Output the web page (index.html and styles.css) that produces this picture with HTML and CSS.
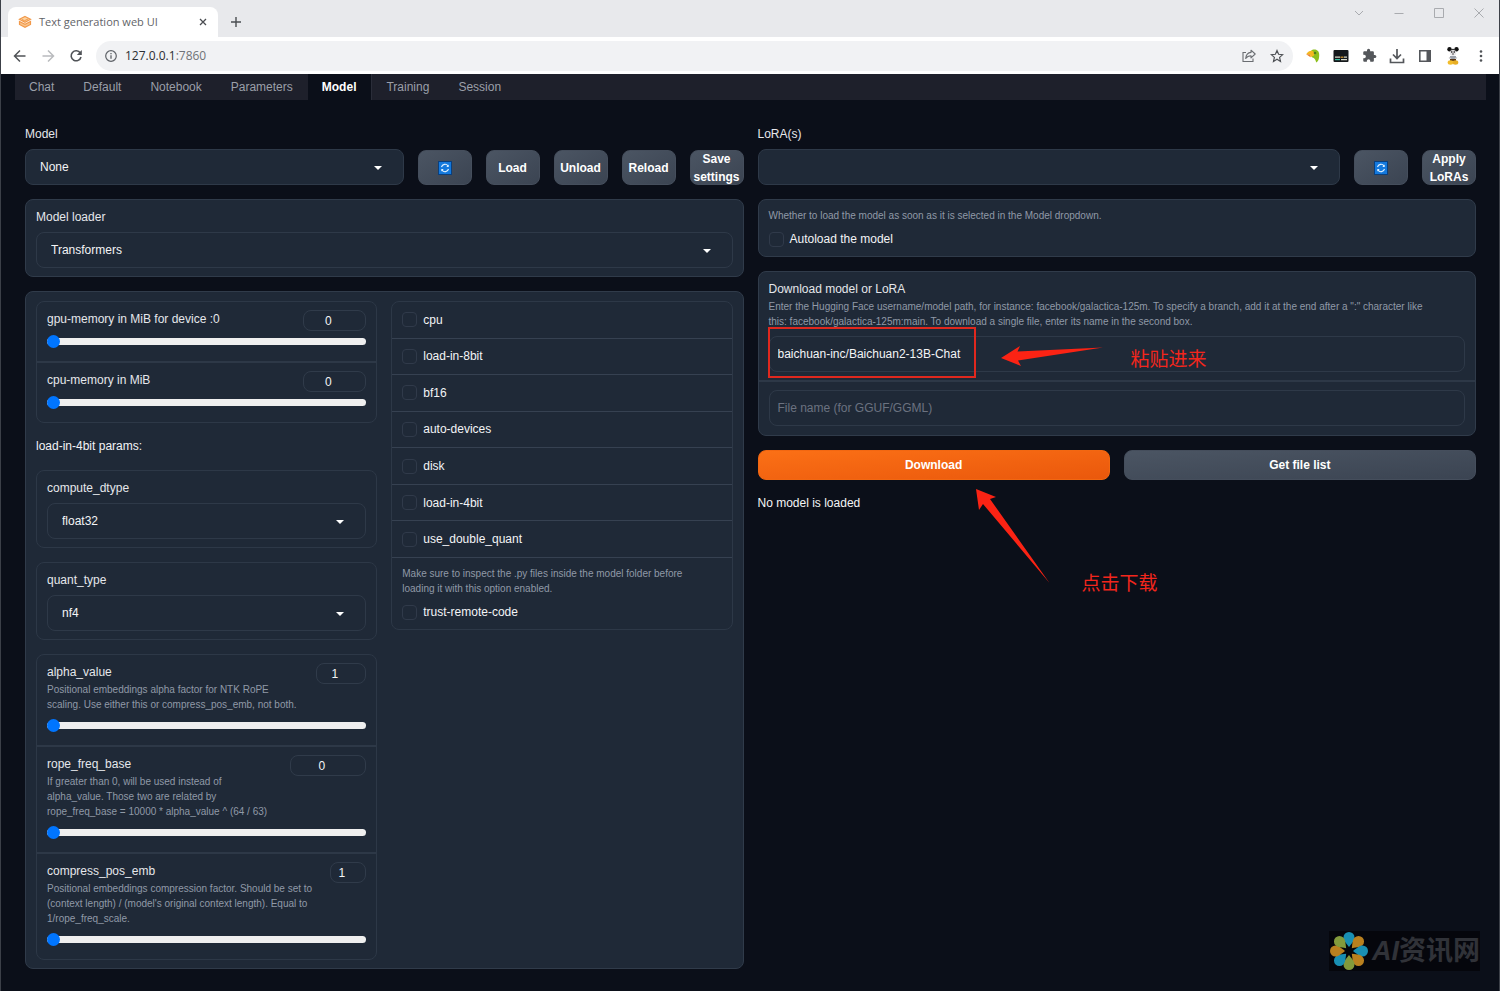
FILE: index.html
```html
<!DOCTYPE html>
<html lang="en">
<head>
<meta charset="utf-8">
<title>Text generation web UI</title>
<link rel="stylesheet" href="styles.css">
</head>
<body>
<div class="window">
  <header class="browser">
    <div class="tabstrip">
      <div class="tab">
        <svg class="favicon" viewBox="0 0 14 14" width="14" height="14"><path d="M7 1.5 12.5 4.3 7 7.2 1.5 4.3Z" fill="#fcd3a0" stroke="#f2994a" stroke-width="1.2"/><path d="M1.5 6.5v3L7 12.3l5.500-2.800v-3L7 9.400Z" fill="#f9c38a" stroke="#f2994a" stroke-width="1.200"/><path d="m4 4.500 2.500 1.200L10 4" fill="none" stroke="#f2994a"/></svg>
        <span class="tab-title">Text generation web UI</span>
        <button class="icon-btn tab-close" aria-label="Close tab"><svg viewBox="0 0 10 10" width="10" height="10"><path d="m2 2 6 6M8 2 2 8" stroke="#4a4d51" stroke-width="1.300"/></svg></button>
      </div>
      <button class="icon-btn new-tab" aria-label="New tab"><svg viewBox="0 0 12 12" width="12" height="12"><path d="M6 1v10M1 6h10" stroke="#4a4d51" stroke-width="1.400"/></svg></button>
      <div class="window-controls">
        <button class="icon-btn win-btn" aria-label="Search tabs"><svg viewBox="0 0 12 12" width="12" height="12"><path d="m2 4 4 4 4-4" fill="none" stroke="#a9abaf"/></svg></button>
        <button class="icon-btn win-btn" aria-label="Minimize"><svg viewBox="0 0 12 12" width="12" height="12"><path d="M1.500 6.500h9" stroke="#a9abaf"/></svg></button>
        <button class="icon-btn win-btn" aria-label="Maximize"><svg viewBox="0 0 12 12" width="12" height="12"><path d="M1.500 1.500h9v9h-9Z" fill="none" stroke="#a9abaf"/></svg></button>
        <button class="icon-btn win-btn" aria-label="Close"><svg viewBox="0 0 12 12" width="12" height="12"><path d="m1.500 1.500 9 9m0-9-9 9" stroke="#a9abaf"/></svg></button>
      </div>
    </div>
    <div class="toolbar">
      <div class="tool-group">
        <button class="icon-btn tool-btn" aria-label="Back"><svg viewBox="0 0 14 14" width="14" height="14"><path d="M12.500 7h-11M7 1.500 1.500 7 7 12.500" fill="none" stroke="#505357" stroke-width="1.500"/></svg></button>
        <button class="icon-btn tool-btn" aria-label="Forward"><svg viewBox="0 0 14 14" width="14" height="14"><path d="M1.500 7h11M7 1.500 12.500 7 7 12.500" fill="none" stroke="#b9bbbe" stroke-width="1.500"/></svg></button>
        <button class="icon-btn tool-btn" aria-label="Reload"><svg viewBox="0 0 14 14" width="14" height="14"><path d="M11.300 4A5 5 0 1 0 12 8" fill="none" stroke="#505357" stroke-width="1.600"/><path d="M12.800 1v5H7.800Z" fill="#505357"/></svg></button>
      </div>
      <div class="omnibox">
        <svg viewBox="0 0 14 14" width="14" height="14"><circle cx="7" cy="7" r="5.300" fill="none" stroke="#5f6368" stroke-width="1.200"/><path d="M7 6.200v3.600M7 4v1.200" stroke="#5f6368" stroke-width="1.300"/></svg>
        <span class="url">127.0.0.1<span class="port">:7860</span></span>
        <button class="icon-btn tool-btn" aria-label="Share"><svg viewBox="0 0 14 14" width="14" height="14"><path d="M4 3.500H1v9h10v-3" fill="none" stroke="#6a6d71" stroke-width="1.100"/><path d="M9 1.200 13.200 5 9 8.800V6.700C6.500 6.700 5 7.500 3.700 9.500 4 6 6 3.700 9 3.400Z" fill="none" stroke="#6a6d71" stroke-width="1.100" stroke-linejoin="round"/></svg></button>
        <button class="icon-btn tool-btn" aria-label="Bookmark"><svg viewBox="0 0 14 14" width="14" height="14"><path d="m7 1.500 1.600 3.800 4.100.4-3.100 2.700.9 4L7 10.300l-3.500 2.100.9-4L1.300 5.700l4.100-.4Z" fill="none" stroke="#505357" stroke-width="1.200"/></svg></button>
      </div>
      <div class="tool-group">
        <button class="icon-btn tool-btn" aria-label="Parrot extension"><svg viewBox="0 0 14 14" width="14" height="14"><path d="M5 2C7-.5 13.500 0 13.200 6c0 3-.6 6.500-3 7.500-.6-2.500-1.300-4.500-4.300-5.300Z" fill="#8dbf1c"/><path d="M6 1.700C3.500 1.500 1.200 3 .2 5.300L4 5.300 4.500 8.300 8 6.500C9 4.500 8 2.500 6 1.700Z" fill="#f5b81f"/><path d="M.2 5.300 4 5.300 4.500 8.300Z" fill="#e8842a"/><circle cx="9" cy="4" r="1.300" fill="#4d7d1b"/></svg></button>
        <button class="icon-btn tool-btn" aria-label="Subtitles extension"><svg viewBox="0 0 16 14" width="16" height="14"><rect x=".5" y="1" width="15" height="12" rx="1" fill="#15181b"/><path d="M2 8.200h5M11 8.200h3M8 10.600h6" stroke="#d8d8c8" stroke-width="1.200"/><path d="M7.500 8.200h3" stroke="#e0a030" stroke-width="1.200"/><path d="M2 10.600h5" stroke="#36bfa0" stroke-width="1.200"/></svg></button>
        <button class="icon-btn tool-btn" aria-label="Extensions"><svg viewBox="0 0 24 24" width="15" height="15"><path fill="#54575b" d="M20.500 11H19V7c0-1.100-.9-2-2-2h-4V3.500a2.500 2.500 0 0 0-5 0V5H4c-1.100 0-2 .9-2 2v3.800h1.500a2.700 2.700 0 0 1 0 5.400H2V20c0 1.100.9 2 2 2h3.800v-1.500a2.700 2.700 0 0 1 5.400 0V22H17c1.100 0 2-.9 2-2v-4h1.500a2.500 2.500 0 0 0 0-5Z"/></svg></button>
        <button class="icon-btn tool-btn" aria-label="Downloads"><svg viewBox="0 0 16 16" width="16" height="16"><path d="M8 1v9M4 6.500l4 4 4-4M1.500 10.500v4h13v-4" fill="none" stroke="#54575b" stroke-width="1.700"/></svg></button>
        <button class="icon-btn tool-btn" aria-label="Side panel"><svg viewBox="0 0 14 14" width="14" height="14"><path d="M1.800 1.800h10.400v10.400H1.800Z" fill="none" stroke="#54575b" stroke-width="1.600"/><path d="M8.500 1.500h4v11h-4Z" fill="#54575b"/></svg></button>
        <button class="icon-btn tool-btn" aria-label="Profile"><svg viewBox="0 0 14 20" width="14" height="20"><circle cx="3.500" cy="3.200" r="2.200" fill="#111"/><circle cx="10.500" cy="3.200" r="2.200" fill="#111"/><circle cx="7" cy="5.500" r="2.800" fill="#333"/><ellipse cx="7" cy="7" rx="3.200" ry="3" fill="#e9e7ea"/><path d="M5.800 5v2M8.200 5v2M6.200 8h1.600" stroke="#111" stroke-width=".9"/><path d="M4 10h6v3H4Z" fill="#9ba1ab"/><path d="M3 11.500 5 13M11 11.500 9 13" stroke="#ccc" stroke-width="1.500"/><path d="M4 13h6v2H4Z" fill="#5a3512"/><ellipse cx="4.500" cy="16.500" rx="2.800" ry="2.200" fill="#f2bd2c"/><ellipse cx="9.500" cy="16.500" rx="2.800" ry="2.200" fill="#e8ae24"/></svg></button>
        <button class="icon-btn tool-btn" aria-label="Menu"><svg viewBox="0 0 4 14" width="4" height="14"><g fill="#505357"><circle cx="2" cy="2.500" r="1.300"/><circle cx="2" cy="7" r="1.300"/><circle cx="2" cy="11.500" r="1.300"/></g></svg></button>
      </div>
    </div>
  </header>

  <div class="app">
    <nav class="nav">
      <button class="nav-tab">Chat</button>
      <button class="nav-tab">Default</button>
      <button class="nav-tab">Notebook</button>
      <button class="nav-tab">Parameters</button>
      <button class="nav-tab nav-tab-active">Model</button>
      <button class="nav-tab">Training</button>
      <button class="nav-tab">Session</button>
    </nav>

    <main class="columns">
      <section class="column">
        <div class="control-row">
          <div class="field field-grow">
            <label class="label" for="model">Model</label>
            <div class="select-wrap"><select class="input filled" id="model"><option>None</option></select></div>
          </div>
          <button class="btn btn-small" aria-label="Refresh models"><svg viewBox="0 0 14 14" width="14" height="14"><rect width="14" height="14" fill="#0a3f7d"/><rect x="1" y="1" width="12" height="12" fill="#1479dd"/><path d="M3.500 6A3.700 3.700 0 0 1 10 4.800M10.500 8A3.700 3.700 0 0 1 4 9.200" fill="none" stroke="#e4f3ff" stroke-width="1.100"/><path d="M10.700 3.500v2.500H8.300ZM3.300 10.500V8H5.700Z" fill="#e4f3ff"/></svg></button>
          <button class="btn btn-small">Load</button>
          <button class="btn btn-small">Unload</button>
          <button class="btn btn-small">Reload</button>
          <button class="btn btn-small">Save settings</button>
        </div>

        <div class="block">
          <div class="field pad">
            <label class="label" for="loader">Model loader</label>
            <div class="select-wrap"><select class="input" id="loader"><option>Transformers</option></select></div>
          </div>
        </div>

        <div class="block params">
          <div class="param-col">
            <div class="block">
              <div class="slider-row">
                <div class="slider-head">
                  <div class="slider-text"><label class="label" for="gpu">gpu-memory in MiB for device :0</label></div>
                  <input class="number number-m" type="number" value="0" aria-label="gpu-memory value">
                </div>
                <input class="slider" id="gpu" type="range" min="0" max="100" value="0">
              </div>
              <div class="slider-row">
                <div class="slider-head">
                  <div class="slider-text"><label class="label" for="cpumem">cpu-memory in MiB</label></div>
                  <input class="number number-m" type="number" value="0" aria-label="cpu-memory value">
                </div>
                <input class="slider" id="cpumem" type="range" min="0" max="100" value="0">
              </div>
            </div>

            <p class="note">load-in-4bit params:</p>

            <div class="block">
              <div class="field pad">
                <label class="label" for="dtype">compute_dtype</label>
                <div class="select-wrap"><select class="input" id="dtype"><option>float32</option></select></div>
              </div>
            </div>
            <div class="block">
              <div class="field pad">
                <label class="label" for="quant">quant_type</label>
                <div class="select-wrap"><select class="input" id="quant"><option>nf4</option></select></div>
              </div>
            </div>

            <div class="block">
              <div class="slider-row">
                <div class="slider-head">
                  <div class="slider-text"><label class="label" for="alpha">alpha_value</label>
                    <p class="info">Positional embeddings alpha factor for NTK RoPE scaling. Use either this or compress_pos_emb, not both.</p></div>
                  <input class="number number-s" type="number" value="1" aria-label="alpha_value number">
                </div>
                <input class="slider" id="alpha" type="range" min="1" max="8" value="1">
              </div>
              <div class="slider-row">
                <div class="slider-head">
                  <div class="slider-text"><label class="label" for="rope">rope_freq_base</label>
                    <p class="info">If greater than 0, will be used instead of alpha_value. Those two are related by rope_freq_base = 10000 * alpha_value ^ (64 / 63)</p></div>
                  <input class="number number-l" type="number" value="0" aria-label="rope_freq_base number">
                </div>
                <input class="slider" id="rope" type="range" min="0" max="100" value="0">
              </div>
              <div class="slider-row">
                <div class="slider-head">
                  <div class="slider-text"><label class="label" for="compress">compress_pos_emb</label>
                    <p class="info">Positional embeddings compression factor. Should be set to (context length) / (model's original context length). Equal to 1/rope_freq_scale.</p></div>
                  <input class="number number-xs" type="number" value="1" aria-label="compress_pos_emb number">
                </div>
                <input class="slider" id="compress" type="range" min="1" max="8" value="1">
              </div>
            </div>
          </div>

          <div class="param-col">
            <div class="block">
              <div class="check-list">
                <label class="check"><input class="box" type="checkbox">cpu</label>
                <label class="check"><input class="box" type="checkbox">load-in-8bit</label>
                <label class="check"><input class="box" type="checkbox">bf16</label>
                <label class="check"><input class="box" type="checkbox">auto-devices</label>
                <label class="check"><input class="box" type="checkbox">disk</label>
                <label class="check"><input class="box" type="checkbox">load-in-4bit</label>
                <label class="check"><input class="box" type="checkbox">use_double_quant</label>
              </div>
              <div class="info-check pad">
                <p class="info">Make sure to inspect the .py files inside the model folder before<br>loading it with this option enabled.</p>
                <label class="check-plain"><input class="box" type="checkbox">trust-remote-code</label>
              </div>
            </div>
          </div>
        </div>
      </section>

      <section class="column">
        <div class="control-row">
          <div class="field field-grow">
            <label class="label" for="lora">LoRA(s)</label>
            <div class="select-wrap"><select class="input filled" id="lora"><option></option></select></div>
          </div>
          <button class="btn btn-small" aria-label="Refresh LoRAs"><svg viewBox="0 0 14 14" width="14" height="14"><rect width="14" height="14" fill="#0a3f7d"/><rect x="1" y="1" width="12" height="12" fill="#1479dd"/><path d="M3.500 6A3.700 3.700 0 0 1 10 4.800M10.500 8A3.700 3.700 0 0 1 4 9.200" fill="none" stroke="#e4f3ff" stroke-width="1.100"/><path d="M10.700 3.500v2.500H8.300ZM3.300 10.500V8H5.700Z" fill="#e4f3ff"/></svg></button>
          <button class="btn btn-small">Apply LoRAs</button>
        </div>

        <div class="block">
          <div class="info-check pad">
            <p class="info">Whether to load the model as soon as it is selected in the Model dropdown.</p>
            <label class="check-plain"><input class="box" type="checkbox">Autoload the model</label>
          </div>
        </div>

        <div class="block">
          <div class="download-row pad">
            <label class="label" for="repo">Download model or LoRA</label>
            <p class="info">Enter the Hugging Face username/model path, for instance: facebook/galactica-125m. To specify a branch, add it at the end after a ":" character like<br>this: facebook/galactica-125m:main. To download a single file, enter its name in the second box.</p>
            <div class="repo-field">
              <input class="input text-input" id="repo" type="text" value="baichuan-inc/Baichuan2-13B-Chat">
              <div class="mark-box"></div>
              <div class="callout callout-paste" lang="zh">
                <svg viewBox="0 0 102 22" width="102" height="22"><path d="M0 12 19 0 16.500 5.500 102 1.500 17 14.500 20 20Z" fill="#fb2314"/></svg>
                <span>粘贴进来</span>
              </div>
            </div>
          </div>
          <div class="download-row pad">
            <input class="input text-input" type="text" placeholder="File name (for GGUF/GGML)" aria-label="File name">
          </div>
        </div>

        <div class="button-row">
          <button class="btn btn-primary">Download</button>
          <button class="btn">Get file list</button>
          <div class="callout callout-click" lang="zh">
            <svg viewBox="0 0 74 96" width="74" height="96"><path d="M0 0 20 8 14 10 73.500 94 7 15 3 21Z" fill="#fb2314"/></svg>
            <span>点击下载</span>
          </div>
        </div>
        <p class="note">No model is loaded</p>
      </section>
    </main>
  </div>

  <div class="watermark" lang="zh">
    <svg viewBox="0 0 38 38" width="38" height="38">
      <defs><path id="petal" d="M19 15C15 10 13.500 8 13.500 5.500a5.500 5.500 0 0 1 11 0C24.500 8 23 10 19 15Z"/></defs>
      <use href="#petal" fill="#198fb3"/><use href="#petal" fill="#b9801f" transform="rotate(45 19 19)"/><use href="#petal" fill="#198fb3" transform="rotate(90 19 19)"/><use href="#petal" fill="#b9801f" transform="rotate(135 19 19)"/><use href="#petal" fill="#829a3c" transform="rotate(180 19 19)"/><use href="#petal" fill="#198fb3" transform="rotate(225 19 19)"/><use href="#petal" fill="#b9801f" transform="rotate(270 19 19)"/><use href="#petal" fill="#829a3c" transform="rotate(315 19 19)"/>
    </svg>
    <span><i>AI</i>资讯网</span>
  </div>
</div>
</body>
</html>
```
FILE: styles.css
```css
* { box-sizing: border-box; }
body {
  margin: 0;
  background: #0b0f19;
  color: #f3f4f6;
  font: 12px/18px "Liberation Sans", Arial, sans-serif;
}
p { margin: 0; }
button, input, select { font: inherit; color: inherit; }
button { cursor: pointer; }
svg { display: block; flex: none; }

.window {
  position: relative;
  min-height: 100vh;
  border: solid #3c4048;
  border-width: 0 1px;
}

/* Browser frame */
.browser { background: #fff; color: #5f6368; font-family: "Open Sans", "Noto Sans", sans-serif; }
.icon-btn {
  display: flex;
  align-items: center;
  justify-content: center;
  padding: 0;
  border: 0;
  background: none;
}
.tabstrip { display: flex; height: 37px; padding-left: 7px; background: #e8e9ec; }
.tab {
  display: flex;
  align-items: center;
  width: 210px;
  margin-top: 7px;
  padding: 0 8px 0 10px;
  border-radius: 8px 8px 0 0;
  background: #fff;
}
.tab-title { flex: 1; margin-left: 7px; font-size: 11px; }
.tab-close { width: 14px; height: 14px; }
.new-tab { width: 28px; margin: 6px 0 0 4px; }
.window-controls { display: flex; margin-left: auto; height: 26px; }
.win-btn { width: 40px; }
.toolbar { display: flex; align-items: center; gap: 6px; height: 37px; padding: 0 4px 0 5px; }
.tool-group { display: flex; }
.tool-btn { width: 28px; height: 28px; }
.omnibox {
  display: flex;
  flex: 1;
  align-items: center;
  height: 30px;
  padding: 0 2px 0 8px;
  border-radius: 15px;
  background: #f1f2f4;
}
.url { flex: 1; margin-left: 7px; color: #2b2e32; font-size: 12px; }
.port { color: #6f7277; }

/* App navigation */
.app { padding: 0 13px 21px 14px; }
.nav { display: flex; background: #1e202b; }
.nav-tab {
  height: 26px;
  padding: 0 15px 0 14px;
  border: 0;
  background: none;
  color: #9b9fa9;
}
.nav-tab-active { border-right: 1px solid #2a2d39; background: #0b0f19; color: #fff; font-weight: 700; }

/* Layout */
.columns { display: grid; grid-template-columns: 1fr 1fr; gap: 14px; padding: 25px 10px 0; }
.column, .param-col { display: flex; flex-direction: column; gap: 14px; min-width: 0; }
.control-row { display: flex; align-items: flex-end; gap: 14px; }
.field { display: flex; flex-direction: column; gap: 6px; }
.field-grow { flex: 1; }
.pad { padding: 8px 10px; }
.block { border: 1px solid #303b4a; border-radius: 8px; background: #1f2937; }
.params { display: grid; grid-template-columns: 1fr 1fr; gap: 14px; padding: 9px 10px 8px; }
.params .block { border-color: #2d3847; }
.param-col { align-self: start; }

/* Text */
.label { display: block; color: #e5e7eb; }
.info { margin-top: 1px; color: #9099a7; font-size: 10px; line-height: 15px; }
.note { line-height: 19px; }

/* Inputs */
.input {
  display: block;
  width: 100%;
  height: 36px;
  padding: 0 14px;
  border: 1px solid #2e3948;
  border-radius: 8px;
  outline: 0;
  background: transparent;
  appearance: none;
}
.filled { background: #1f2937; }
.text-input { padding: 0 8px; }
.text-input::placeholder { color: #6b7280; }
.select-wrap { position: relative; }
.select-wrap::after {
  content: "";
  position: absolute;
  top: 17px;
  right: 22px;
  border: 4px solid transparent;
  border-top-color: #fff;
  border-bottom: 0;
  pointer-events: none;
}

/* Buttons */
.btn {
  display: flex;
  flex: 1;
  align-items: center;
  justify-content: center;
  height: 30px;
  padding: 0 2px;
  border: 1px solid #454e5c;
  border-radius: 8px;
  background: linear-gradient(to bottom right, #4b5563, #3b4452);
  color: #fff;
  font-weight: 700;
}
.btn-small { flex: none; width: 54px; height: 35px; line-height: 18px; }
.btn-primary { border-color: #f26711; background: linear-gradient(to bottom right, #fb7016, #ea580c); }
.button-row { position: relative; display: flex; gap: 14px; }

/* Sliders */
.slider-row { padding: 8px 10px 13px; }
.slider-row + .slider-row, .download-row + .download-row { border-top: 2px solid #2d3847; }
.download-row + .download-row { padding-bottom: 9px; }
.slider-head { display: flex; align-items: flex-start; gap: 12px; }
.slider-text { flex: 1; padding-bottom: 4px; }
.number {
  height: 21px;
  padding: 0 13px 0 0;
  border: 1px solid #303b4a;
  border-radius: 8px;
  background: transparent;
  text-align: center;
  appearance: textfield;
}
.number::-webkit-inner-spin-button { display: none; }
.number-xs { width: 36px; }
.number-s { width: 50px; }
.number-m { width: 63px; }
.number-l { width: 76px; }
.slider {
  display: block;
  width: 100%;
  height: 13px;
  margin: 3px 0 0;
  background: transparent;
  appearance: none;
}
.slider::-webkit-slider-runnable-track { height: 7px; border-radius: 4px; background: #efefef; }
.slider::-webkit-slider-thumb {
  width: 13px;
  height: 13px;
  margin-top: -3px;
  border-radius: 50%;
  background: #0075ff;
  appearance: none;
}

/* Check boxes */
.check-list { display: grid; grid-auto-rows: 1fr; min-height: 256px; }
.check, .check-plain { display: flex; align-items: center; gap: 6px; }
.check { padding: 0 10px; border-bottom: 1px solid #364151; }
.check-plain { margin-top: 7px; }
.info-check .info { margin-top: 0; }
.box {
  width: 15px;
  height: 15px;
  margin: 0;
  border: 1px solid #303a4a;
  border-radius: 4px;
  background: transparent;
  appearance: none;
}

/* Annotations */
.repo-field { position: relative; margin-top: 7px; }
.mark-box {
  position: absolute;
  top: -9px;
  left: -1px;
  width: 208px;
  height: 51px;
  border: 2px solid #e0281e;
  pointer-events: none;
}
.callout {
  position: absolute;
  display: flex;
  color: #f3261c;
  font: 19px/24px "Noto Sans CJK SC", sans-serif;
  white-space: nowrap;
  pointer-events: none;
}
.callout-paste { top: 10px; left: 232px; gap: 28px; }
.callout-click { top: 39px; left: 218px; gap: 32px; }
.callout-click span { margin-top: 81px; }

.watermark {
  position: absolute;
  right: 19px;
  bottom: 20px;
  display: flex;
  align-items: center;
  height: 40px;
  gap: 4px;
  padding-left: 1px;
  background: #05060c;
  color: #303238;
  font: 700 27px/40px "Liberation Sans", "Noto Sans CJK SC", sans-serif;
}
```
